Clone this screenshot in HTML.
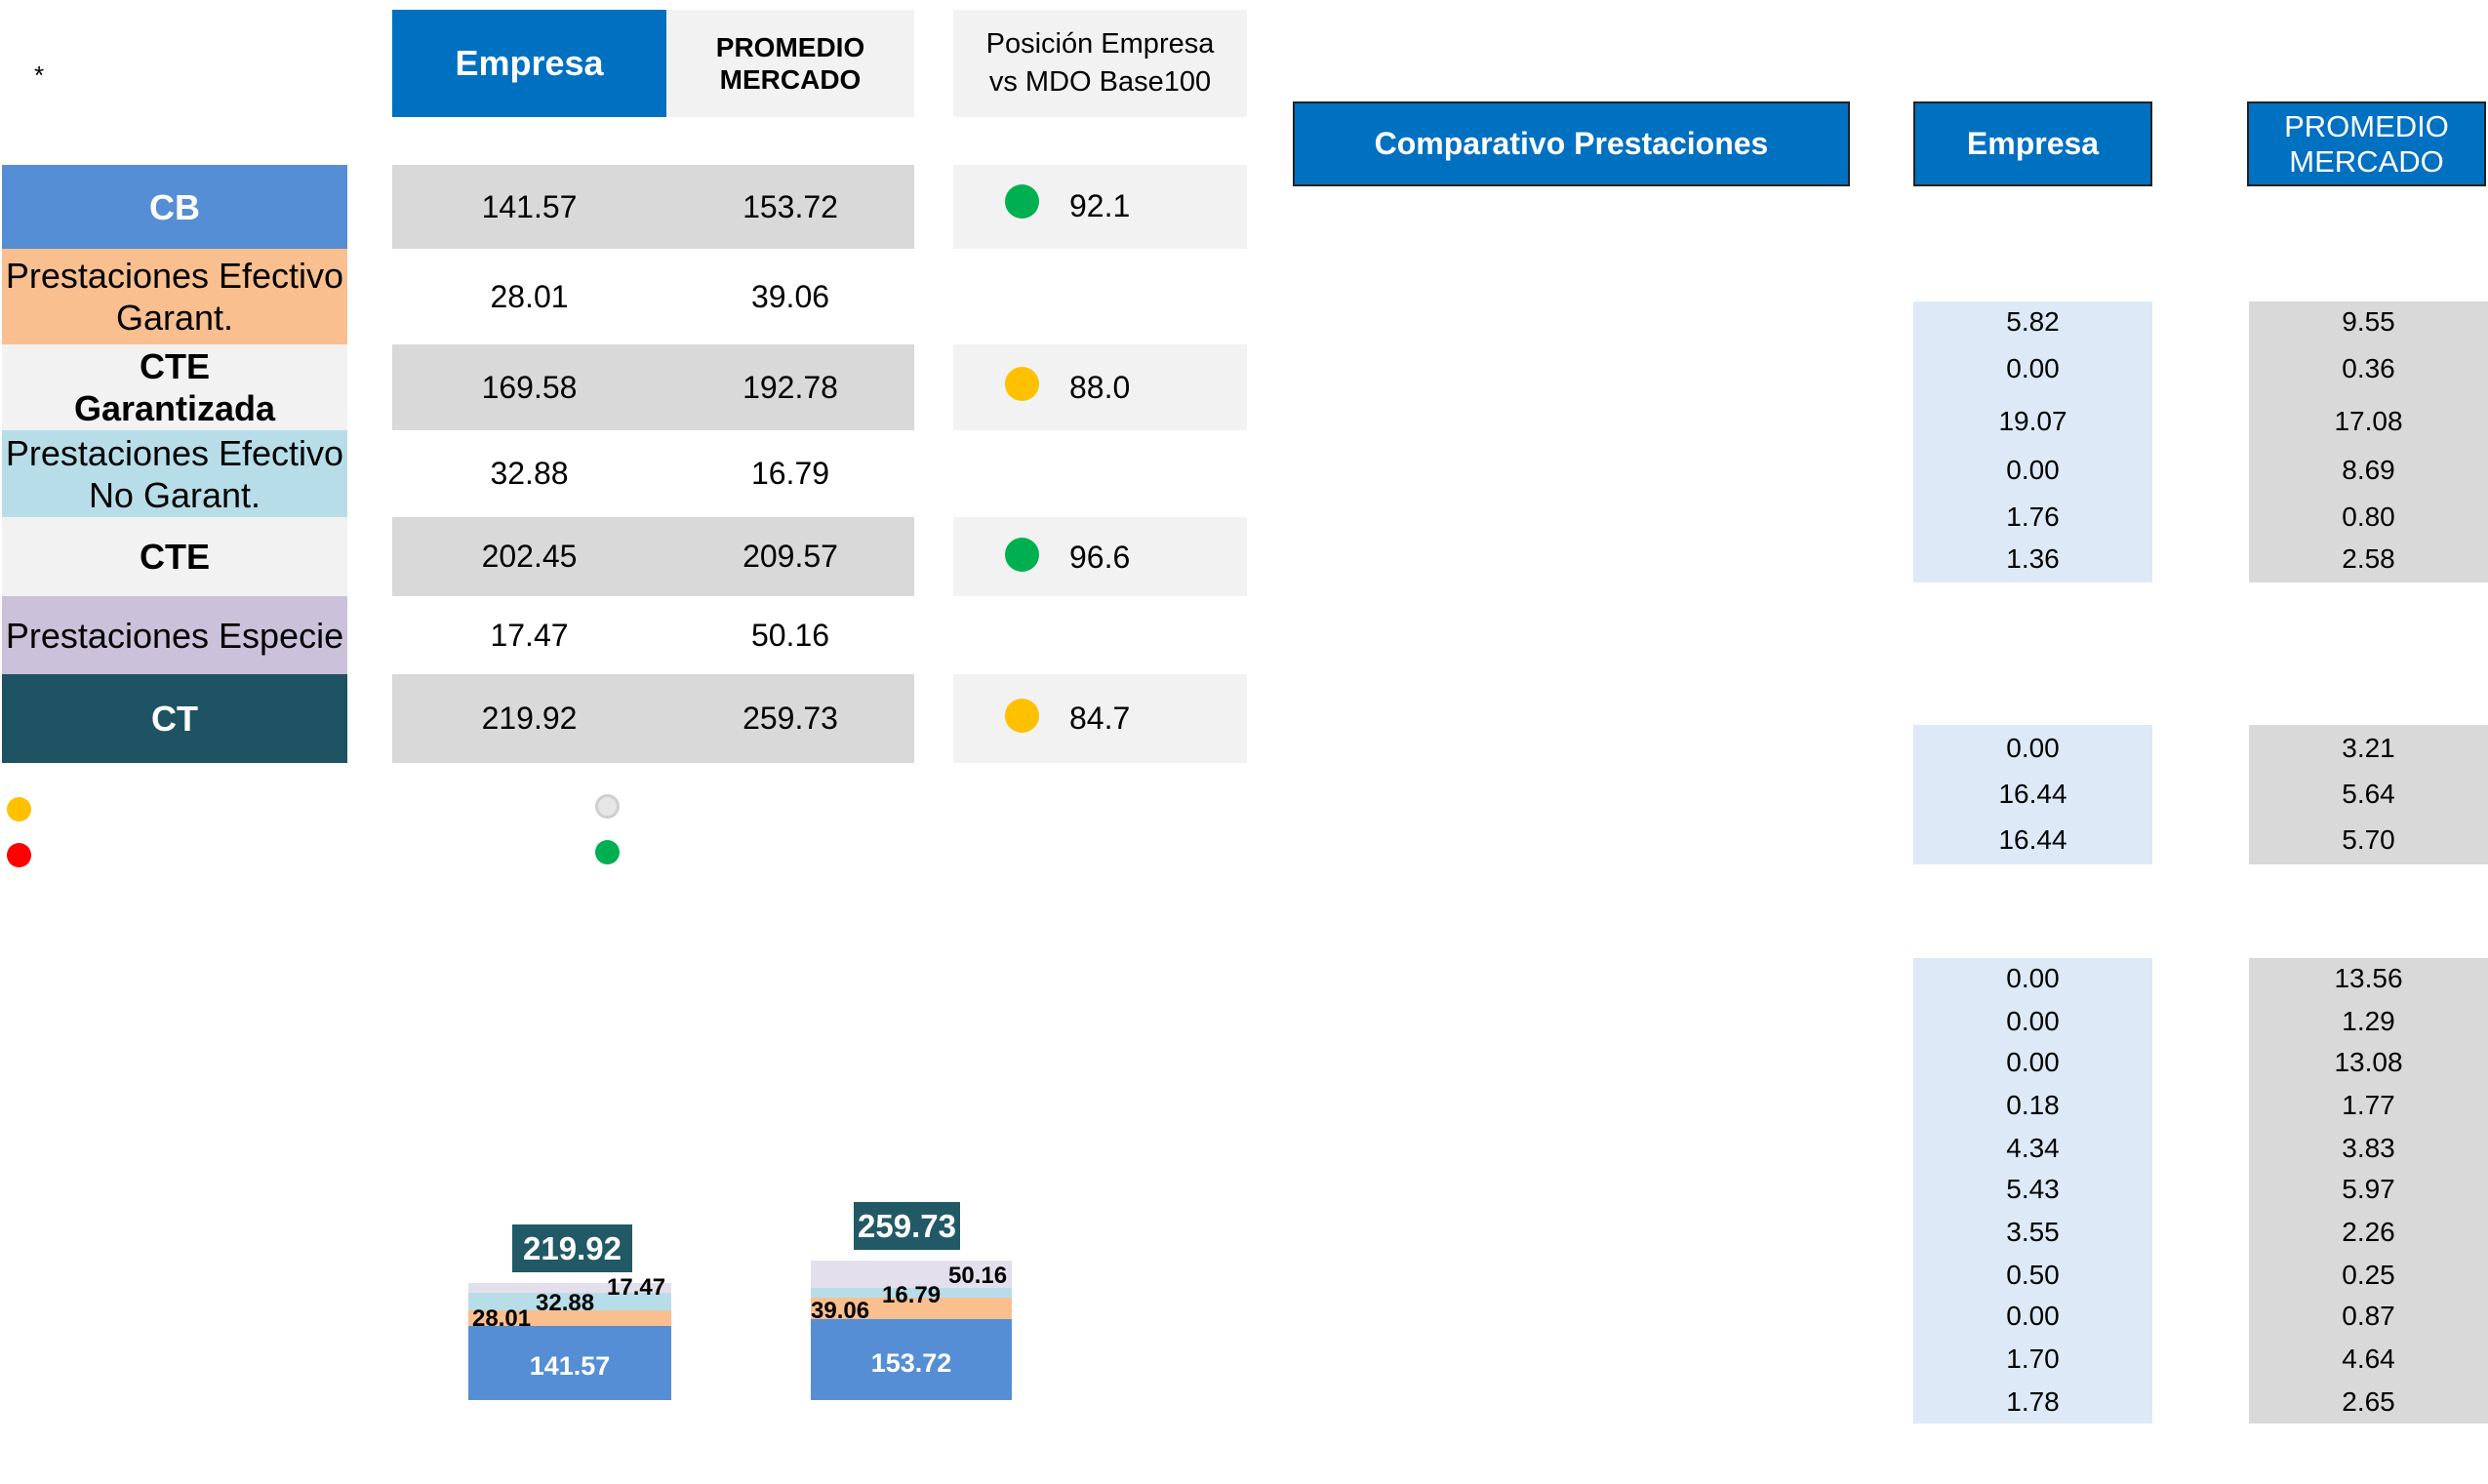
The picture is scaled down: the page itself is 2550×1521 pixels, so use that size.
<!DOCTYPE html>
<html><head><meta charset="utf-8"><style>
body{margin:0;width:2550px;height:1521px;background:#fff;position:relative;overflow:hidden;font-family:"Liberation Sans",Arial,sans-serif;color:#000}
div{position:absolute;box-sizing:border-box}
.c{display:flex;align-items:center;justify-content:center;text-align:center;white-space:nowrap}
.lbl{left:2px;width:354px;font-size:36px;line-height:43px}
.v{font-size:32px}
.dot{border-radius:50%}
.rv{font-size:28px;left:0;width:100%;text-align:center;transform:translateY(-50%)}
.bl{font-size:24px;font-weight:bold;white-space:nowrap;transform:translateY(-50%)}
</style></head><body>
<div style="left:35px;top:62px;font-size:26px">*</div>

<div class="c" style="left:402px;top:10px;width:281px;height:110px;background:#0070c0;color:#fff;font-weight:bold;font-size:36px">Empresa</div>
<div class="c" style="left:683px;top:10px;width:254px;height:110px;background:#f2f2f2;font-weight:bold;font-size:28px;line-height:33px">PROMEDIO<br>MERCADO</div>
<div class="c" style="left:977px;top:10px;width:301px;height:110px;background:#f2f2f2;font-size:29px;line-height:39px">Posición Empresa<br>vs MDO Base100</div>

<div class="c lbl" style="top:169px;height:86px;background:#558ed5;color:#fff;font-weight:bold">CB</div>
<div class="c lbl" style="top:255px;height:98px;background:#f9bf8f">Prestaciones Efectivo<br>Garant.</div>
<div class="c lbl" style="top:353px;height:88px;background:#f2f2f2;font-weight:bold">CTE<br>Garantizada</div>
<div class="c lbl" style="top:441px;height:89px;background:#b7dee8">Prestaciones Efectivo<br>No Garant.</div>
<div class="c lbl" style="top:530px;height:81px;background:#f2f2f2;font-weight:bold">CTE</div>
<div class="c lbl" style="top:611px;height:80px;background:#ccc1da">Prestaciones Especie</div>
<div class="c lbl" style="top:691px;height:91px;background:#1d5363;color:#fff;font-weight:bold">CT</div>

<div style="left:402px;top:169px;width:535px;height:86px;background:#d9d9d9"></div>
<div style="left:402px;top:353px;width:535px;height:88px;background:#d9d9d9"></div>
<div style="left:402px;top:530px;width:535px;height:81px;background:#d9d9d9"></div>
<div style="left:402px;top:691px;width:535px;height:91px;background:#d9d9d9"></div>
<div style="left:977px;top:169px;width:301px;height:86px;background:#f2f2f2"></div>
<div style="left:977px;top:353px;width:301px;height:88px;background:#f2f2f2"></div>
<div style="left:977px;top:530px;width:301px;height:81px;background:#f2f2f2"></div>
<div style="left:977px;top:691px;width:301px;height:91px;background:#f2f2f2"></div>

<div class="c v" style="left:402px;top:169px;width:281px;height:86px">141.57</div>
<div class="c v" style="left:683px;top:169px;width:254px;height:86px">153.72</div>
<div class="c v" style="left:402px;top:255px;width:281px;height:98px">28.01</div>
<div class="c v" style="left:683px;top:255px;width:254px;height:98px">39.06</div>
<div class="c v" style="left:402px;top:353px;width:281px;height:88px">169.58</div>
<div class="c v" style="left:683px;top:353px;width:254px;height:88px">192.78</div>
<div class="c v" style="left:402px;top:441px;width:281px;height:89px">32.88</div>
<div class="c v" style="left:683px;top:441px;width:254px;height:89px">16.79</div>
<div class="c v" style="left:402px;top:530px;width:281px;height:81px">202.45</div>
<div class="c v" style="left:683px;top:530px;width:254px;height:81px">209.57</div>
<div class="c v" style="left:402px;top:611px;width:281px;height:80px">17.47</div>
<div class="c v" style="left:683px;top:611px;width:254px;height:80px">50.16</div>
<div class="c v" style="left:402px;top:691px;width:281px;height:91px">219.92</div>
<div class="c v" style="left:683px;top:691px;width:254px;height:91px">259.73</div>

<div class="dot" style="left:1030px;top:189px;width:35px;height:35px;background:#00b050"></div>
<div class="v" style="left:1096px;top:193px">92.1</div>
<div class="dot" style="left:1030px;top:376px;width:35px;height:35px;background:#ffc000"></div>
<div class="v" style="left:1096px;top:379px">88.0</div>
<div class="dot" style="left:1030px;top:551px;width:35px;height:35px;background:#00b050"></div>
<div class="v" style="left:1096px;top:553px">96.6</div>
<div class="dot" style="left:1030px;top:716px;width:35px;height:35px;background:#ffc000"></div>
<div class="v" style="left:1096px;top:718px">84.7</div>

<div class="dot" style="left:7px;top:817px;width:25px;height:25px;background:#ffc000"></div>
<div class="dot" style="left:7px;top:864px;width:25px;height:25px;background:#ff0000"></div>
<div class="dot" style="left:610px;top:814px;width:25px;height:25px;background:#e6e6e6;border:3px solid #cfcfcf"></div>
<div class="dot" style="left:610px;top:861px;width:25px;height:25px;background:#00b050"></div>

<div style="left:480px;top:1315px;width:208px;height:10px;background:#e4dfec"></div>
<div style="left:480px;top:1325px;width:208px;height:18px;background:#b7dee8"></div>
<div style="left:480px;top:1343px;width:208px;height:16px;background:#f9bf8f"></div>
<div style="left:480px;top:1359px;width:208px;height:76px;background:#558ed5"></div>
<div class="c" style="left:525px;top:1255px;width:123px;height:49px;background:#215967;color:#fff;font-weight:bold;font-size:33px">219.92</div>
<div class="bl" style="left:484px;top:1352px">28.01</div>
<div class="bl" style="left:549px;top:1336px">32.88</div>
<div class="bl" style="left:622px;top:1320px">17.47</div>
<div class="c" style="left:480px;top:1380px;width:208px;height:40px;color:#fff;font-weight:bold;font-size:27px">141.57</div>

<div style="left:831px;top:1292px;width:206px;height:28px;background:#e4dfec"></div>
<div style="left:831px;top:1320px;width:206px;height:10px;background:#b7dee8"></div>
<div style="left:831px;top:1330px;width:206px;height:22px;background:#f9bf8f"></div>
<div style="left:831px;top:1352px;width:206px;height:83px;background:#558ed5"></div>
<div class="c" style="left:875px;top:1232px;width:109px;height:49px;background:#215967;color:#fff;font-weight:bold;font-size:33px">259.73</div>
<div class="bl" style="left:831px;top:1344px">39.06</div>
<div class="bl" style="left:904px;top:1328px">16.79</div>
<div class="bl" style="left:972px;top:1308px">50.16</div>
<div class="c" style="left:831px;top:1377px;width:206px;height:40px;color:#fff;font-weight:bold;font-size:27px">153.72</div>

<div class="c" style="left:1325px;top:104px;width:571px;height:87px;background:#0070c0;border:2px solid #222;color:#fff;font-weight:bold;font-size:32px">Comparativo Prestaciones</div>
<div class="c" style="left:1961px;top:104px;width:245px;height:87px;background:#0070c0;border:2px solid #222;color:#fff;font-weight:bold;font-size:32px">Empresa</div>
<div class="c" style="left:2303px;top:104px;width:245px;height:87px;background:#0070c0;border:2px solid #222;color:#fff;font-size:31px;line-height:36px">PROMEDIO<br>MERCADO</div>

<div style="left:1961px;top:309px;width:245px;height:288px;background:#dde9f6"></div>
<div style="left:2305px;top:309px;width:245px;height:288px;background:#d9d9d9"></div>
<div style="left:1961px;top:743px;width:245px;height:143px;background:#dde9f6"></div>
<div style="left:2305px;top:743px;width:245px;height:143px;background:#d9d9d9"></div>
<div style="left:1961px;top:982px;width:245px;height:477px;background:#dde9f6"></div>
<div style="left:2305px;top:982px;width:245px;height:477px;background:#d9d9d9"></div>

<div style="left:1961px;top:0;width:245px;height:1521px">
<div class="rv" style="top:330px">5.82</div><div class="rv" style="top:378px">0.00</div><div class="rv" style="top:432px">19.07</div><div class="rv" style="top:482px">0.00</div><div class="rv" style="top:530px">1.76</div><div class="rv" style="top:573px">1.36</div>
<div class="rv" style="top:767px">0.00</div><div class="rv" style="top:814px">16.44</div><div class="rv" style="top:861px">16.44</div>
<div class="rv" style="top:1003px">0.00</div><div class="rv" style="top:1047px">0.00</div><div class="rv" style="top:1089px">0.00</div><div class="rv" style="top:1133px">0.18</div><div class="rv" style="top:1177px">4.34</div><div class="rv" style="top:1219px">5.43</div><div class="rv" style="top:1263px">3.55</div><div class="rv" style="top:1307px">0.50</div><div class="rv" style="top:1349px">0.00</div><div class="rv" style="top:1393px">1.70</div><div class="rv" style="top:1437px">1.78</div>
</div>
<div style="left:2305px;top:0;width:245px;height:1521px">
<div class="rv" style="top:330px">9.55</div><div class="rv" style="top:378px">0.36</div><div class="rv" style="top:432px">17.08</div><div class="rv" style="top:482px">8.69</div><div class="rv" style="top:530px">0.80</div><div class="rv" style="top:573px">2.58</div>
<div class="rv" style="top:767px">3.21</div><div class="rv" style="top:814px">5.64</div><div class="rv" style="top:861px">5.70</div>
<div class="rv" style="top:1003px">13.56</div><div class="rv" style="top:1047px">1.29</div><div class="rv" style="top:1089px">13.08</div><div class="rv" style="top:1133px">1.77</div><div class="rv" style="top:1177px">3.83</div><div class="rv" style="top:1219px">5.97</div><div class="rv" style="top:1263px">2.26</div><div class="rv" style="top:1307px">0.25</div><div class="rv" style="top:1349px">0.87</div><div class="rv" style="top:1393px">4.64</div><div class="rv" style="top:1437px">2.65</div>
</div>
</body></html>
